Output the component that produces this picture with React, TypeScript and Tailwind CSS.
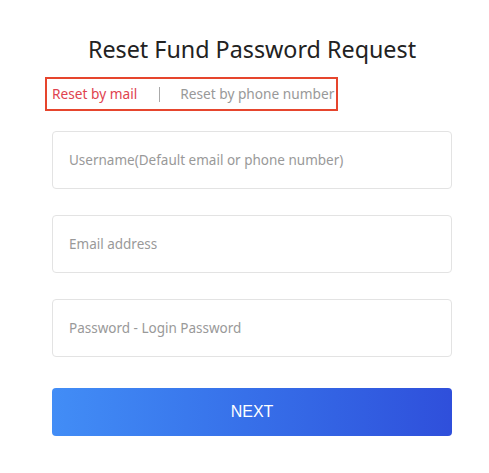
export default function App() {
  const fields = [
    "Username(Default email or phone number)",
    "Email address",
    "Password - Login Password",
  ];

  return (
    <div className="min-h-[473px] w-[489px] bg-white font-['Noto_Sans',sans-serif]">
      <div className="ml-[52px] flex w-[400px] flex-col pt-[33px]">
        <h1 className="text-center text-[23.3px] leading-[32px] font-normal text-[#222]">
          Reset Fund Password Request
        </h1>

        {/* tab switcher */}
        <div className="-ml-[7px] mt-[12px] flex h-[34px] w-[293px] items-center whitespace-nowrap border-2 border-[#e6452d] pl-[5px] text-[13.7px]">
          <span className="shrink-0 text-[#e0434f]">Reset by mail</span>
          <span className="ml-[22px] mr-[20px] h-[15px] w-px shrink-0 bg-[#aaa]" />
          <span className="shrink-0 text-[#999]">Reset by phone number</span>
        </div>

        <div className="mt-[20px] flex flex-col gap-[26px]">
          {fields.map((f) => (
            <input
              key={f}
              placeholder={f}
              className="h-[58px] w-full rounded-[4px] border border-[#e3e3e3] px-[16px] text-[13.5px] text-[#333] outline-none placeholder:text-[#999]"
            />
          ))}
        </div>

        <button className="mt-[31px] h-[48px] w-full rounded-[4px] bg-gradient-to-r from-[#428df6] to-[#2f4fdb] font-['Liberation_Sans',sans-serif] text-[16px] text-white">
          NEXT
        </button>
      </div>
    </div>
  );
}
